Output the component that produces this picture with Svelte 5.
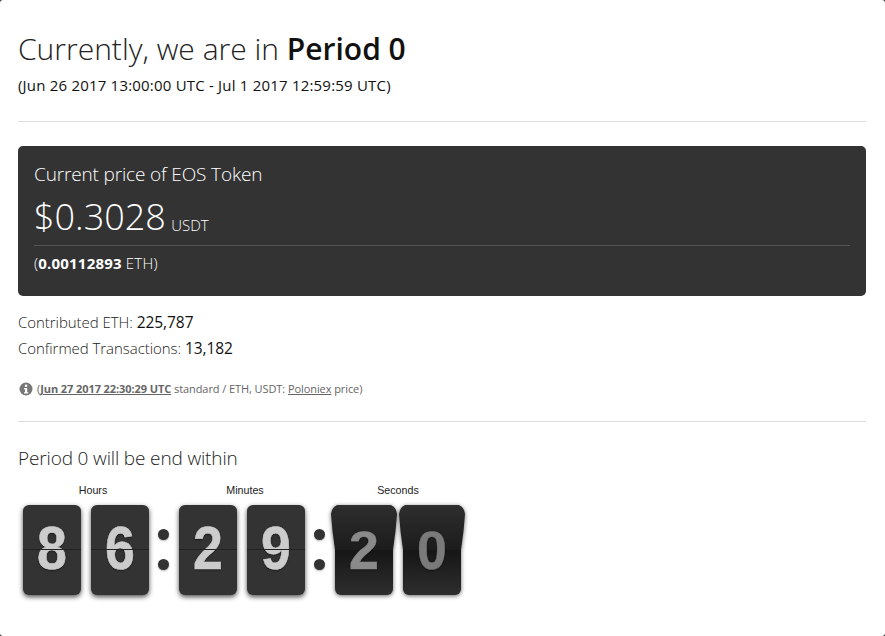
<script>
  const groups = [
    { label: 'Hours', digits: [{ v: '8' }, { v: '6' }] },
    { label: 'Minutes', digits: [{ v: '2' }, { v: '9' }] },
    { label: 'Seconds', digits: [{ v: '2', flip: 'a' }, { v: '0', flip: 'b' }] }
  ];
</script>

<main class="page">
  <h1>Currently, we are in <b>Period 0</b></h1>
  <p class="range">(Jun 26 2017 13:00:00 UTC - Jul 1 2017 12:59:59 UTC)</p>
  <hr />
  <section class="panel">
    <div class="title">Current price of EOS Token</div>
    <div class="price">$0.3028 <small>USDT</small></div>
    <div class="eth">(<b>0.00112893</b> ETH)</div>
  </section>
  <div class="stat">Contributed ETH: <b>225,787</b></div>
  <div class="stat">Confirmed Transactions: <b>13,182</b></div>
  <p class="note">
    <svg class="info" viewBox="0 0 14 14" width="14" height="14" aria-hidden="true">
      <circle cx="7" cy="7" r="6.5" fill="#777" />
      <rect x="5.9" y="2.6" width="2.3" height="2.2" fill="#fff" />
      <path d="M5 5.9h3.2v4.3h1v1.3H5v-1.3h1V7.2H5z" fill="#fff" />
    </svg>
    <span>(<a href="#t"><b>Jun 27 2017 22:30:29 UTC</b></a> standard / ETH, USDT: <a href="#p">Poloniex</a> price)</span>
  </p>
  <hr class="second" />
  <h2>Period 0 will be end within</h2>
  <div class="clock">
    {#each groups as g, i}
      {#if i > 0}
        <div class="colon"><i></i><i></i></div>
      {/if}
      <div class="group">
        <div class="label l{i}">{g.label}</div>
        <div class="digits">
          {#each g.digits as d}
            {#if d.flip}
              <div class="card flip" class:dim={d.flip === 'b'}>
                <div class="half up"><span aria-hidden="true">{d.v}</span></div>
                <div class="half down"><span>{d.v}</span></div>
              </div>
            {:else}
              <div class="card still"><span>{d.v}</span></div>
            {/if}
          {/each}
        </div>
      </div>
    {/each}
  </div>
</main>

<style>
  :global(body) {
    margin: 0;
    background: #333;
    color: #111;
    font-family: "Open Sans", "Noto Sans", sans-serif;
  }
  .page {
    box-sizing: border-box;
    background: #fff;
    border-radius: 3px;
    padding: 30px 19px 0 18px;
    height: 636px;
    overflow: hidden;
  }
  h1 {
    margin: 0;
    font-size: 30px;
    line-height: 38px;
    font-weight: 300;
    color: #222;
  }
  h1 b {
    font-weight: 600;
    color: #111;
  }
  .range {
    margin: 6px 0 0;
    font-size: 15px;
    line-height: 22px;
    letter-spacing: 0.2px;
  }
  hr {
    border: 0;
    border-top: 1px solid #ddd;
    margin: 25px 0 24px;
  }
  .panel {
    background: #333;
    color: #fff;
    border-radius: 5px;
    height: 150px;
    box-sizing: border-box;
    padding: 16px 16px 0;
  }
  .title {
    font-size: 19px;
    line-height: 25px;
    font-weight: 300;
    letter-spacing: -0.15px;
  }
  .price {
    font-size: 36px;
    line-height: 40px;
    font-weight: 300;
    word-spacing: -4px;
    padding-top: 10px;
    padding-bottom: 0;
    border-bottom: 1px solid #555;
  }
  .price small {
    font-size: 15px;
    font-weight: 300;
    vertical-align: -1px;
  }
  .eth {
    font-size: 15px;
    line-height: 20px;
    margin-top: 7px;
    font-weight: 300;
    letter-spacing: 0.2px;
  }
  .eth b {
    font-weight: 700;
  }
  .stat {
    font-size: 15px;
    line-height: 26px;
    font-weight: 300;
    color: #222;
    letter-spacing: -0.05px;
  }
  .stat:first-of-type {
    margin-top: 13px;
  }
  .stat b {
    font-size: 15.5px;
    font-weight: 500;
    color: #111;
  }
  .note {
    display: flex;
    align-items: center;
    gap: 4px;
    margin: 20px 0 0 1px;
    font-size: 11px;
    line-height: 16px;
    letter-spacing: -0.08px;
    color: #666;
  }
  .note a {
    color: #666;
  }
  hr.second {
    margin: 24px 0 0;
  }
  h2 {
    margin: 23px 0 0;
    font-size: 19px;
    line-height: 26px;
    font-weight: 300;
    color: #222;
    letter-spacing: -0.15px;
  }
  .clock {
    display: flex;
    margin: 12px 0 0 5px;
    font-family: "Liberation Sans", Arial, sans-serif;
  }
  .label {
    font-size: 10.7px;
    line-height: 14px;
    height: 22px;
    text-align: center;
    color: #222;
  }
  .l0 {
    padding-left: 14px;
  }
  .l1 {
    padding-left: 6px;
  }
  .digits {
    display: flex;
    gap: 10px;
  }
  .colon {
    width: 30px;
    padding-top: 22px;
    padding-right: 1px;
    box-sizing: border-box;
    display: flex;
    flex-direction: column;
    align-items: center;
  }
  .colon i {
    display: block;
    width: 11px;
    height: 11px;
    border-radius: 50%;
    background: #323232;
    margin-top: 24px;
    box-shadow: 0 1px 2px rgba(0, 0, 0, 0.3);
  }
  .colon i + i {
    margin-top: 19px;
  }
  .card {
    position: relative;
    width: 58px;
    height: 90px;
    border-radius: 6px;
    box-shadow: 0 2px 5px rgba(0, 0, 0, 0.7);
    background: #333;
    font-size: 61px;
    font-weight: 700;
    color: #ccc;
    text-align: center;
    text-shadow: 0 1px 2px rgba(0, 0, 0, 0.6);
    -webkit-text-stroke: 0.6px currentColor;
  }
  .still span {
    display: block;
    line-height: 87px;
    transform: scaleX(0.88);
  }
  .still::after {
    content: "";
    position: absolute;
    left: 0;
    right: 0;
    top: 44px;
    height: 1px;
    background: #222;
  }
  .half {
    position: absolute;
    left: 0;
    right: 0;
    height: 45px;
    overflow: hidden;
  }
  .half span {
    position: absolute;
    left: 0;
    right: 0;
    line-height: 87px;
    transform: scaleX(0.88);
  }
  .flip {
    background: transparent;
    box-shadow: none;
    color: #8a8a8a;
    filter: drop-shadow(0 1px 2px rgba(0, 0, 0, 0.6));
  }
  .flip.dim {
    color: #7a7a7a;
  }
  .down {
    top: 45px;
    border-radius: 0 0 6px 6px;
    background: linear-gradient(#161616, #2e2e2e);
  }
  .down span {
    top: -45px;
  }
  .up {
    top: 0;
    left: -4px;
    right: -4px;
    background: linear-gradient(#303030 0, #2a2a2a 8px, #1c1c1c);
    clip-path: polygon(6px 0, 60px 0, 63px 2px, 65px 5px, 66px 9px, 64.5px 26px, 62px 45px, 4px 45px, 1.5px 26px, 0 9px, 1px 5px, 3px 2px);
  }
  .up span {
    top: 0;
    transform-origin: 50% 45px;
    transform: scale(0.88, 0.8);
  }
</style>
